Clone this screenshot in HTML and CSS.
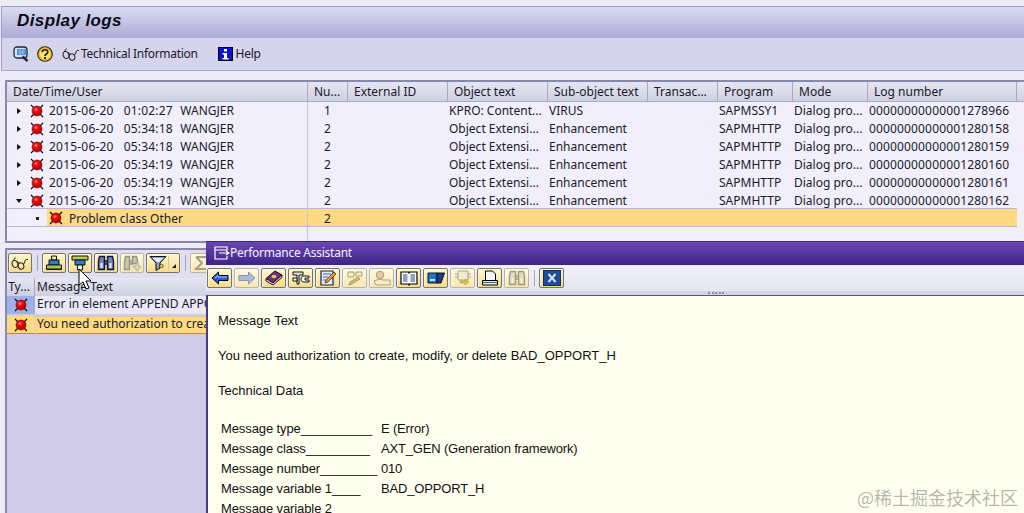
FILE: index.html
```html
<!DOCTYPE html>
<html lang="en">
<head>
<meta charset="utf-8">
<title>Display logs</title>
<link rel="stylesheet" href="styles.css">
</head>
<body>
<svg class="defs" width="0" height="0" aria-hidden="true">
  <defs>
    <radialGradient id="red" cx="40%" cy="35%" r="70%"><stop offset="0" stop-color="#ff9a9a"/><stop offset=".3" stop-color="#f40c0c"/><stop offset="1" stop-color="#a00000"/></radialGradient>
    <symbol id="led" viewBox="0 0 14 14"><path d="M1 1l3 3M13 1l-3 3M1 13l3-3M13 13l-3-3" stroke="#000" stroke-width="1.1" fill="none"/><circle cx="7" cy="7" r="5" fill="url(#red)" stroke="#700" stroke-width=".6"/></symbol>
    <symbol id="glasses" viewBox="0 0 18 14"><g fill="none" stroke="#222" stroke-width="1"><ellipse cx="4" cy="8" rx="2.8" ry="3.6" transform="rotate(-20 4 8)"/><ellipse cx="10" cy="10" rx="2.8" ry="3.2" transform="rotate(-20 10 10)"/><path d="M6 6c1-.5 1.700 0 2 1.500M12.500 8.500L14 5c.5-1.500 1.500-1.800 3-1.500M2 5l2.500-3.500"/></g></symbol>
    <symbol id="find" viewBox="0 0 16 16"><rect x="1" y="1" width="13" height="11" rx="3" fill="#d8e0ea" stroke="#1c2a3a" stroke-width="1.300"/><rect x="4" y="3" width="9" height="6" rx="1" fill="#3f85e0"/><path d="M5 5h7M5 7h7M7 3v6M10 3v6" stroke="#a8d0f8" stroke-width=".7"/><path d="M9.500 10.500l5 4.500" stroke="#20303c" stroke-width="2.600"/></symbol>
    <symbol id="help" viewBox="0 0 16 16"><circle cx="8" cy="8" r="7.300" fill="#ffd21e" stroke="#222" stroke-width="1.100"/><circle cx="8" cy="8" r="5.800" fill="#ffe268" stroke="#e09a10" stroke-width=".6"/><path d="M5.200 6.200C5.200 3 10.800 3 10.800 6c0 2-2.800 2-2.800 4" fill="none" stroke="#222" stroke-width="1.700"/><rect x="7" y="11" width="2" height="2" fill="#222"/></symbol>
    <symbol id="info" viewBox="0 0 15 14"><rect x=".5" y=".5" width="14" height="13" fill="#0a14c8" stroke="#000"/><rect x="6" y="2" width="3" height="2.400" fill="#fff"/><path d="M4.500 6H9v5h1.500v1.500h-6V11H6V7.500H4.500z" fill="#fff"/></symbol>
    <symbol id="stack" viewBox="0 0 18 16"><path d="M6.500 1h5v4h-5z" fill="#f2e49a" stroke="#111"/><path d="M4 5h10v5H4z" fill="#2f7fc0" stroke="#111"/><path d="M1.500 10h15v4.500h-15z" fill="#a8c850" stroke="#111"/><path d="M2 14h14" stroke="#111"/></symbol>
    <symbol id="subtotal" viewBox="0 0 18 16"><path d="M1 1h16v4H1z" fill="#b4cc50" stroke="#111"/><path d="M4 5h10v5H4z" fill="#2f7fc0" stroke="#111"/><path d="M6.500 10h5v5h-5z" fill="#f4f2dc" stroke="#111"/></symbol>
    <symbol id="binoc" viewBox="0 0 18 16"><path d="M2.500 1.500h5v13h-6V6zM10.500 1.500h5l1 4.500v8.500h-6zM7.500 6h3v3h-3z" fill="#7484ac" stroke="#14183c" stroke-width="1.400"/><path d="M3.500 8h2v5h-2zM12.500 8h2v5h-2z" fill="#eef2fa"/></symbol>
    <symbol id="binocoff" viewBox="0 0 18 16"><path d="M2.500 1.500h5v13h-6V6zM10.500 1.500h5l1 4.500v8.500h-6zM7.500 6h3v3h-3z" fill="#e2dcc0" stroke="#a09c84" stroke-width="1.400"/><path d="M3.500 8h2v5h-2zM12.500 8h2v5h-2z" fill="#fbf5d8"/></symbol>
    <symbol id="binocplus" viewBox="0 0 18 16"><path d="M2.500 1.500h4v13h-5V6zM9.500 1.500h4l1 4v3h-5zM6.500 6h3v3h-3z" fill="#c8c4ac" stroke="#9a9682" stroke-width="1.400"/><path d="M13 8v3h-3v2h3v3h2v-3h3v-2h-3V8z" fill="#e0dcc0" stroke="#9a9682" stroke-width=".6"/></symbol>
    <symbol id="funnel" viewBox="0 0 18 16"><path d="M1 1.500h16l-6 6.500v5l-4 2.500V8z" fill="#8aa0c4" stroke="#111"/><path d="M3.500 3h11L10 7H8z" fill="#e8eef8"/><circle cx="12.500" cy="11" r="1.800" fill="#f0d848" stroke="#111" stroke-width=".6"/></symbol>
    <symbol id="sigma" viewBox="0 0 16 16"><path d="M2 2h12v3M14 14H2l6-6-6-6" fill="none" stroke="#a5a184" stroke-width="2"/></symbol>
    <symbol id="back" viewBox="0 0 18 14"><path d="M1 7l6.500-6v3.500H17v5H7.500V13z" fill="#1f5ff0" stroke="#000"/><path d="M4 7l3-2.500V6h9" stroke="#a8ccff" fill="none"/></symbol>
    <symbol id="fwd" viewBox="0 0 18 14"><path d="M17 7l-6.500-6v3.500H1v5h9.500V13z" fill="#a8bce0" stroke="#8d94a5"/></symbol>
    <symbol id="book" viewBox="0 0 18 16"><path d="M1 8.500L10 1l7 4-9 8z" fill="#6f2a90" stroke="#111"/><path d="M1 8.500v2.500l7 4 9-7.500V5l-9 8z" fill="#efe4c4" stroke="#111"/><ellipse cx="9" cy="6.500" rx="2.500" ry="1.800" fill="#f2c838"/></symbol>
    <symbol id="tools" viewBox="0 0 18 16"><path d="M1 2h10v3H7v9H5V5H1z" fill="#e8e8e0" stroke="#111"/><path d="M1 8h4v3H1z" fill="#fff" stroke="#111"/><path d="M17 6h-5c-2 0-3 1.200-3 3s1 3 3 3h5v-2h-4V8h4z" fill="#fff" stroke="#111"/></symbol>
    <symbol id="edit" viewBox="0 0 16 16"><path d="M1 1h12v14H1z" fill="#e4efff" stroke="#182038" stroke-width="1.200"/><path d="M3 4h8M3 7h5M3 10h3" stroke="#3060b0"/><path d="M5 13l1-3 8-8 2 2-8 8z" fill="#f09a20" stroke="#222" stroke-width=".7"/></symbol>
    <symbol id="signoff" viewBox="0 0 18 16"><path d="M2 2h6v5H2zM10 2h6v4h-6z" fill="#f5eeb8" stroke="#a8a078"/><path d="M3 15l1-3 8-5 2 2-8 5z" fill="#d8b868" stroke="#a8a078"/></symbol>
    <symbol id="person" viewBox="0 0 18 16"><circle cx="7" cy="5" r="3.800" fill="#e8c8a0" stroke="#a8a080"/><path d="M1 11l6-2 3 1h7v5H3z" fill="#f6eec8" stroke="#a8a080"/></symbol>
    <symbol id="open" viewBox="0 0 18 16"><path d="M1 2h7.500l.5 1 .5-1H17v12H9.500l-.5 1-.5-1H1z" fill="#fff" stroke="#000" stroke-width="1.200"/><path d="M3 5h4.500M3 7h4.500M3 9h4.500M3 11h4.500M10.500 5H15M10.500 7H15M10.500 9H15M10.500 11H15" stroke="#124a8a"/></symbol>
    <symbol id="tree" viewBox="0 0 18 14"><path d="M1 2h9v10H1z" fill="#1878d0" stroke="#111"/><path d="M10 2h7.500L14 12h-4z" fill="#183a90" stroke="#111"/><path d="M3 8h5v2H3z" fill="#cfe2f8"/></symbol>
    <symbol id="move" viewBox="0 0 18 16"><path d="M4 1h10v9H4z" fill="#f0ecd0" stroke="#a8a280"/><path d="M1 4h3M14 4h3M1 7h3M14 7h3" stroke="#a8a280"/><path d="M6 11h5V9l4 3-4 3v-2H6z" fill="#e8c040" stroke="#a08830" stroke-width=".5"/></symbol>
    <symbol id="print" viewBox="0 0 18 16"><path d="M4.500 1h7l3 3v7h-10z" fill="#f2f6ff" stroke="#000"/><path d="M1.500 10.500h15v4.500h-15z" fill="#fff" stroke="#000"/><path d="M2 12.500h14" stroke="#3a7a90" stroke-width="1.400"/></symbol>
    <symbol id="close" viewBox="0 0 18 16"><rect x=".5" y=".5" width="17" height="15" fill="#1e4f96" stroke="#103060"/><path d="M5.500 4l7 8M12.500 4l-7 8" stroke="#cfe0f6" stroke-width="2.200"/></symbol>
    <symbol id="popout" viewBox="0 0 16 14"><path d="M1 1h12v3H1zM1 4v9h12v-3M5 7h10M12 5l3 2-3 2" fill="none" stroke="#fff" stroke-width="1.200"/></symbol>
  </defs>
</svg>

<header class="titlebar"><h1 class="title">Display logs</h1></header>
<nav class="appbar">
  <svg class="ic16"><use href="#find"/></svg>
  <svg class="ic16"><use href="#help"/></svg>
  <span class="applink tech"><svg class="ic-glass"><use href="#glasses"/></svg>Technical Information</span>
  <span class="applink helpl"><svg class="ic-info"><use href="#info"/></svg>Help</span>
</nav>

<section class="grid-frame">
  <div class="row head">
    <div class="hc first">Date/Time/User</div><div class="hc">Nu...</div><div class="hc">External ID</div><div class="hc">Object text</div><div class="hc">Sub-object text</div><div class="hc">Transac...</div><div class="hc">Program</div><div class="hc">Mode</div><div class="hc">Log number</div>
  </div>
  <div class="row">
    <div class="c tree"><i class="arrow"></i><svg class="led"><use href="#led"/></svg><span class="dt">2015-06-20</span><span class="dt">01:02:27</span><span>WANGJER</span></div><div class="c num">1</div><div class="c"></div><div class="c">KPRO: Content...</div><div class="c">VIRUS</div><div class="c"></div><div class="c">SAPMSSY1</div><div class="c">Dialog pro...</div><div class="c lognum">00000000000001278966</div>
  </div>
  <div class="row">
    <div class="c tree"><i class="arrow"></i><svg class="led"><use href="#led"/></svg><span class="dt">2015-06-20</span><span class="dt">05:34:18</span><span>WANGJER</span></div><div class="c num">2</div><div class="c"></div><div class="c">Object Extensi...</div><div class="c">Enhancement</div><div class="c"></div><div class="c">SAPMHTTP</div><div class="c">Dialog pro...</div><div class="c lognum">00000000000001280158</div>
  </div>
  <div class="row">
    <div class="c tree"><i class="arrow"></i><svg class="led"><use href="#led"/></svg><span class="dt">2015-06-20</span><span class="dt">05:34:18</span><span>WANGJER</span></div><div class="c num">2</div><div class="c"></div><div class="c">Object Extensi...</div><div class="c">Enhancement</div><div class="c"></div><div class="c">SAPMHTTP</div><div class="c">Dialog pro...</div><div class="c lognum">00000000000001280159</div>
  </div>
  <div class="row">
    <div class="c tree"><i class="arrow"></i><svg class="led"><use href="#led"/></svg><span class="dt">2015-06-20</span><span class="dt">05:34:19</span><span>WANGJER</span></div><div class="c num">2</div><div class="c"></div><div class="c">Object Extensi...</div><div class="c">Enhancement</div><div class="c"></div><div class="c">SAPMHTTP</div><div class="c">Dialog pro...</div><div class="c lognum">00000000000001280160</div>
  </div>
  <div class="row">
    <div class="c tree"><i class="arrow"></i><svg class="led"><use href="#led"/></svg><span class="dt">2015-06-20</span><span class="dt">05:34:19</span><span>WANGJER</span></div><div class="c num">2</div><div class="c"></div><div class="c">Object Extensi...</div><div class="c">Enhancement</div><div class="c"></div><div class="c">SAPMHTTP</div><div class="c">Dialog pro...</div><div class="c lognum">00000000000001280161</div>
  </div>
  <div class="row">
    <div class="c tree"><i class="arrow down"></i><svg class="led"><use href="#led"/></svg><span class="dt">2015-06-20</span><span class="dt">05:34:21</span><span>WANGJER</span></div><div class="c num">2</div><div class="c"></div><div class="c">Object Extensi...</div><div class="c">Enhancement</div><div class="c"></div><div class="c">SAPMHTTP</div><div class="c">Dialog pro...</div><div class="c lognum">00000000000001280162</div>
  </div>
  <div class="row selected">
    <div class="c tree child"><i class="bullet"></i><span class="sel-name"><svg class="led"><use href="#led"/></svg>Problem class Other</span></div><div class="c num sel">2</div><div class="c sel wide"></div>
  </div>
  <div class="row blank"><div class="c tree"></div></div>
</section>

<section class="lower">
  <div class="lowbar">
    <span class="btn"><svg class="bi"><use href="#glasses"/></svg></span>
    <i class="sep"></i>
    <span class="btn"><svg class="bi"><use href="#stack"/></svg></span>
    <span class="btn"><svg class="bi"><use href="#subtotal"/></svg></span>
    <span class="btn"><svg class="bi"><use href="#binoc"/></svg></span>
    <span class="btn off"><svg class="bi"><use href="#binocplus"/></svg></span>
    <span class="btn wide-btn"><svg class="bi"><use href="#funnel"/></svg><i class="btn-split"></i><i class="caret"></i></span>
    <i class="sep"></i>
    <span class="btn off"><svg class="bi"><use href="#sigma"/></svg></span>
  </div>
  <div class="msgrow msghead"><div class="ty">Ty...</div><div class="mt">Message Text</div></div>
  <div class="msgrow"><div class="ty t-blue"><svg class="led"><use href="#led"/></svg></div><div class="mt m-plain">Error in element APPEND APPOINTMENT</div></div>
  <div class="msgrow gapped"><div class="ty t-gold"><svg class="led"><use href="#led"/></svg></div><div class="mt m-gold">You need authorization to create, modify, or delete</div></div>
</section>

<svg class="cursor" width="14" height="22" viewBox="0 0 14 22"><path d="M1 1v16l4-3 3 7 3-1-3-7h5z" fill="#fff" stroke="#000"/></svg>

<aside class="assistant">
  <div class="as-title"><svg class="as-icon"><use href="#popout"/></svg>Performance Assistant</div>
  <div class="as-tools">
    <span class="btn as"><svg class="bi"><use href="#back"/></svg></span>
    <span class="btn as off"><svg class="bi"><use href="#fwd"/></svg></span>
    <span class="btn as"><svg class="bi"><use href="#book"/></svg></span>
    <span class="btn as"><svg class="bi"><use href="#tools"/></svg></span>
    <span class="btn as"><svg class="bi"><use href="#edit"/></svg></span>
    <span class="btn as off"><svg class="bi"><use href="#signoff"/></svg></span>
    <span class="btn as off"><svg class="bi"><use href="#person"/></svg></span>
    <span class="btn as"><svg class="bi"><use href="#open"/></svg></span>
    <span class="btn as"><svg class="bi"><use href="#tree"/></svg></span>
    <span class="btn as off"><svg class="bi"><use href="#move"/></svg></span>
    <span class="btn as"><svg class="bi"><use href="#print"/></svg></span>
    <span class="btn as off"><svg class="bi"><use href="#binocoff"/></svg></span>
    <i class="sep as-sep"></i>
    <span class="btn as"><svg class="bi"><use href="#close"/></svg></span>
  </div>
  <div class="as-sash"><i></i><i></i><i></i><i></i><i></i></div>
  <div class="as-body">
    <p class="p1">Message Text</p>
    <p class="p2">You need authorization to create, modify, or delete BAD_OPPORT_H</p>
    <p class="p2">Technical Data</p>
    <dl class="tech-data">
      <dt>Message type__________</dt><dd>E (Error)</dd>
      <dt>Message class_________</dt><dd>AXT_GEN (Generation framework)</dd>
      <dt>Message number________</dt><dd>010</dd>
      <dt>Message variable 1____</dt><dd>BAD_OPPORT_H</dd>
      <dt>Message variable 2</dt><dd></dd>
    </dl>
  </div>
</aside>

<div class="watermark">@稀土掘金技术社区</div>
</body>
</html>
```

FILE: styles.css
```css
* { box-sizing: border-box; }
html, body { height: 100%; }
body {
  margin: 0;
  height: 513px;
  overflow: hidden;
  position: relative;
  padding-top: 6px;
  background: #ecebf6;
  color: #1a1a2a;
  font: 12px/18px "Noto Sans", "DejaVu Sans", sans-serif;
}
.defs { position: absolute; }

.titlebar {
  height: 32px;
  margin-left: 1px;
  padding: 0 0 4px 15px;
  border-top: 1px solid #9e9bc6;
  border-left: 1px solid #9e9bc6;
  background: linear-gradient(#dbdaf0, #aeaad6);
  display: flex;
  align-items: center;
}
.title {
  margin: 0;
  font: italic 700 17px/20px "Liberation Sans", sans-serif;
  letter-spacing: .4px;
  color: #0a0a14;
}
.appbar {
  height: 33px;
  margin-left: 1px;
  padding-left: 11px;
  display: flex;
  align-items: center;
  background: #d5d4ec;
  border-left: 1px solid #9e9bc6;
  border-bottom: 1px solid #a8a6cc;
}
.ic16 { width: 16px; height: 16px; margin-right: 8px; }
.applink { display: flex; align-items: center; letter-spacing: -.3px; }
.tech { margin-left: 1px; }
.helpl { margin-left: 20px; }
.ic-glass { width: 18px; height: 14px; margin-right: 1px; }
.ic-info { width: 15px; height: 14px; margin-right: 3px; }

.grid-frame {
  margin: 9px 0 0 5px;
  height: 163px;
  border: 2px solid #8a87ad;
  border-right: 0;
  border-bottom-width: 2px;
  background: #f0effb;
  padding-right: 7px;
  overflow: hidden;
}
.row {
  display: grid;
  grid-template-columns: 301px 40px 100px 100px 100px 70px 75px 75px 1fr;
  height: 18px;
  line-height: 18px;
}
.head {
  height: 20px;
  background: linear-gradient(#e6e6f2, #cfcfe2);
  border-bottom: 1px solid #aaa9c8;
  margin-right: -7px;
  grid-template-columns: 301px 40px 100px 100px 100px 70px 75px 75px 149px 1fr;
}
.hc {
  padding-left: 6px;
  line-height: 19px;
  border-right: 1px solid #a9a8c4;
  white-space: nowrap;
  overflow: hidden;
}
.c { padding-left: 1px; white-space: nowrap; overflow: hidden; }
.num { text-align: center; padding-right: 2px; }
.tree {
  display: flex;
  align-items: center;
  padding-left: 10px;
  border-right: 1px solid #c4c3da;
}
.arrow {
  width: 0; height: 0;
  margin-right: 9px;
  border-left: 4px solid #111;
  border-top: 3.5px solid transparent;
  border-bottom: 3.5px solid transparent;
}
.arrow.down {
  margin-right: 7px;
  margin-left: -1px;
  border-top: 4px solid #111;
  border-left: 3.5px solid transparent;
  border-right: 3.5px solid transparent;
  border-bottom: 0;
}
.arrow.down { margin-right: 8px; }
.led { width: 14px; height: 14px; flex: none; }
.dt { margin-right: 10px; letter-spacing: .2px; }
.dt + .dt { margin-right: 7.5px; }
.lognum { letter-spacing: .15px; }
.tree .led { margin-right: 5px; }
.selected { height: 19px; margin-top: -2px; border-top: 1px solid #b9b8d2; border-bottom: 1px solid #b9b8d2; line-height: 17px; }
.selected .c { padding-top: 1px; }
.child { padding-left: 29px; background: linear-gradient(90deg, #f0effb 40px, #fdd981 40px); }
.bullet { width: 3px; height: 3px; background: #222; margin-right: 10px; flex: none; }
.sel-name { display: flex; align-items: center; }
.sel-name .led { margin-right: 6px; }
.sel { background: #fdd981; }
.wide { grid-column: 3 / -1; }
.blank { height: 16px; }

.lower {
  margin: 5px 0 0 5px;
  height: 270px;
  border-top: 2px solid #8a87ad;
  border-left: 2px solid #8a87ad;
  background: #cfcbe8;
}
.lowbar {
  height: 28px;
  padding: 3px 0 0 1px;
  background: #e0dff1;
  display: flex;
  align-items: flex-start;
  gap: 2px;
}
.btn {
  flex: none;
  width: 24px;
  height: 20px;
  display: flex;
  align-items: center;
  justify-content: center;
  background: linear-gradient(#fff8d2, #f6d98c);
  border: 1px solid #77755f;
  border-radius: 2px;
  box-shadow: 1px 1px 0 #fff8dc inset;
}
.btn.off { background: linear-gradient(#fffbe4, #f7e6b0); border-color: #b8b6a2; }
.bi { width: 18px; height: 16px; flex: none; }
.wide-btn { width: 34px; justify-content: flex-start; padding-left: 2px; position: relative; }
.btn-split { position: absolute; right: 10px; top: 2px; bottom: 2px; width: 1px; background: #c6d49a; }
.caret {
  position: absolute; right: 3px; bottom: 4px;
  border-top: 4px solid transparent;
  border-right: 4px solid #111;
}
.sep { width: 1px; height: 16px; margin: 2px 2.5px; background: #a5a4bd; }
.msgrow { display: flex; height: 18px; }
.gapped { margin-top: 2px; }
.ty { width: 28px; flex: none; display: flex; align-items: center; justify-content: center; }
.mt { padding-left: 2px; white-space: nowrap; flex: 1; overflow: hidden; }
.msghead { background: linear-gradient(#e6e6f2, #cfcfe2); }
.msghead .ty { padding-right: 3px; border-right: 1px solid #a9a8c4; }
.t-blue { background: #9eb0e6; }
.t-gold { background: #fdd981; border-bottom: 1px solid #c9823a; }
.m-plain { background: #e9e8f6; line-height: 16px; }
.m-gold { background: #fdd981; border-top: 1px solid #e8c890; border-bottom: 1px solid #c9823a; line-height: 14px; margin-left: 1px; padding-left: 1px; }

.cursor { position: absolute; left: 78px; top: 268px; }

.assistant {
  position: absolute;
  left: 206px; top: 241px;
  width: 818px; height: 272px;
  display: flex;
  flex-direction: column;
  background: #e4e3f3;
}
.as-title {
  height: 24px;
  display: flex;
  align-items: center;
  padding: 0 0 2px 8px;
  color: #f4f2ff;
  letter-spacing: -.25px;
  background: linear-gradient(#6b46b0, #3d2486);
  border-top: 1px solid #3b2a78;
}
.as-icon { width: 16px; height: 14px; }
.as-tools {
  height: 26px;
  display: flex;
  align-items: center;
  gap: 2px;
  padding-left: 1px;
  background: linear-gradient(#f0f0fa, #e6e6f4);
}
.btn.as { width: 25px; height: 20px; }
.as-sep { margin: 0 2px 0 3px; }
.as-sash {
  height: 4px;
  padding-left: 502px;
  background: #d4d4e8;
  display: flex;
  align-items: center;
  gap: 1.5px;
}
.as-sash i { width: 2px; height: 2px; background: #8d8cab; }
.as-body {
  flex: 1;
  overflow: hidden;
  background: #ffffef;
  border-top: 1px solid #56566c;
  border-left: 2px solid #4a3a80;
  padding-left: 10px;
  font: 13px/15px "Liberation Sans", Arial, sans-serif;
  color: #111;
}
.as-body p { margin: 0; }
.p1 { padding-top: 17px; }
.p2 { padding-top: 20px; }
.tech-data {
  margin: 23px 0 0 3px;
  display: grid;
  grid-template-columns: 160px 1fr;
  row-gap: 5px;
}
.tech-data dt, .tech-data dd { margin: 0; white-space: nowrap; }
.tech-data dt { letter-spacing: -.1px; }
.tech-data dd { letter-spacing: -.17px; }

.watermark {
  position: absolute;
  right: 6px; bottom: 4px;
  font: 18px/24px "Noto Sans CJK SC", "Noto Sans", sans-serif;
  color: rgba(90, 90, 90, .45);
  white-space: nowrap;
}
```
